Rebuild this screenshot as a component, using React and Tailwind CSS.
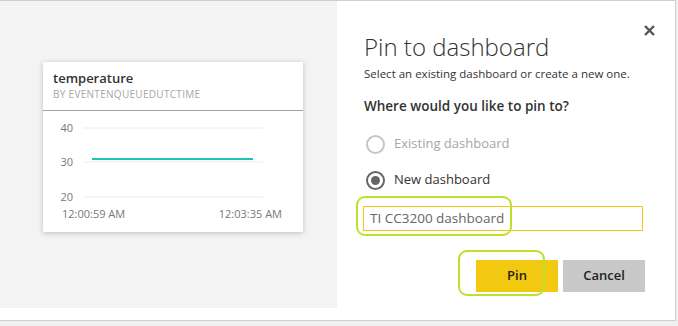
import React from 'react';

const font = { fontFamily: '"Open Sans", "Noto Sans", sans-serif' };

// chart geometry, relative to the svg box
const gridY = [
  { label: '40', y: 17 },
  { label: '30', y: 51 },
  { label: '20', y: 86 },
];

const TileChart = () => {
  return (
    <svg width="260" height="120" className="block">
      {gridY.map((g) => (
        <g key={g.label}>
          <line x1="40" x2="220" y1={g.y} y2={g.y} stroke="#ececec" strokeWidth="1" />
          <text x="30" y={g.y + 4} textAnchor="end" fontSize="11" fill="#777" style={font}>
            {g.label}
          </text>
        </g>
      ))}
      <line x1="49" x2="210" y1="48" y2="48" stroke="#1fc4b4" strokeWidth="2" />
      <text x="19" y="107" fontSize="11" fill="#777" style={font}>12:00:59 AM</text>
      <text x="239" y="107" textAnchor="end" fontSize="11" fill="#777" style={font}>12:03:35 AM</text>
    </svg>
  );
};

const Radio = ({ checked, label }) => {
  return (
    <div className="flex items-center h-[20px]">
      <div
        className={`w-[19px] h-[19px] rounded-full border-2 flex items-center justify-center ${
          checked ? 'border-[#666]' : 'border-[#c6c6c6]'
        }`}
      >
        {checked && <div className="w-[9px] h-[9px] rounded-full bg-[#666]" />}
      </div>
      <span className={`ml-[9px] text-[13px] ${checked ? 'text-[#333]' : 'text-[#a6a6a6]'}`}>{label}</span>
    </div>
  );
};

const App = () => {
  return (
    <div className="w-[678px] h-[326px] bg-[#f0f0f0] overflow-hidden" style={font}>
      <div className="w-[676px] h-[321px] bg-white border-t border-r border-b border-[#cfcfcf] flex">
        {/* left: tile preview */}
        <div className="w-[337px] h-[307px] bg-[#f3f3f3] pl-[43px] pt-[61px]">
          <div className="w-[260px] h-[170px] bg-white shadow-[0_1px_5px_rgba(0,0,0,0.22)]">
            <div className="h-[49px] border-b border-[#a3a3a3] pl-[10px] pt-[8px]">
              <div className="text-[13px] leading-[17px] font-semibold text-[#333]">temperature</div>
              <div className="text-[10px] leading-[14px] text-[#a6a6a6] tracking-[0.3px]">BY EVENTENQUEUEDUTCTIME</div>
            </div>
            <TileChart />
          </div>
        </div>

        {/* right: pin form */}
        <div className="relative flex-1 pl-[27px] pt-[30px]">
          <button className="absolute right-[17px] top-[20px] w-[18px] h-[18px] flex items-center justify-center">
            <svg width="11" height="11" viewBox="0 0 11 11">
              <path d="M1 1 L10 10 M10 1 L1 10" stroke="#555" strokeWidth="2.4" />
            </svg>
          </button>

          <h1 className="text-[24px] leading-[32px] font-light text-[#333]">Pin to dashboard</h1>
          <p className="text-[11.5px] leading-[16px] text-[#333] mt-[3px]">Select an existing dashboard or create a new one.</p>
          <h2 className="text-[13.5px] leading-[18px] font-semibold text-[#333] mt-[15px]">Where would you like to pin to?</h2>

          <div className="mt-[19px] flex flex-col gap-[16px] pl-[2px]">
            <Radio label="Existing dashboard" />
            <Radio checked label="New dashboard" />
          </div>

          <div className="relative mt-[16px] ml-[-1px] w-[280px] h-[25px] border border-[#f2c811] flex items-center pl-[6px] text-[13.5px] text-[#666]">
            TI CC3200 dashboard
            <div className="absolute left-[-8px] top-[-11px] w-[156px] h-[40px] border-2 border-[#b9e32a] rounded-[9px]" />
          </div>

          <div className="mt-[29px] flex justify-end gap-[5px] w-[281px]">
            <div className="relative">
              <button className="w-[82px] h-[32px] bg-[#f2c811] text-[13px] font-semibold text-[#222]">Pin</button>
              <div className="absolute left-[-18px] top-[-10px] w-[87px] h-[46px] border-2 border-[#b9e32a] rounded-[9px]" />
            </div>
            <button className="w-[82px] h-[32px] bg-[#c8c8c8] text-[13px] font-semibold text-[#222]">Cancel</button>
          </div>
        </div>
      </div>
    </div>
  );
};

export default App;
